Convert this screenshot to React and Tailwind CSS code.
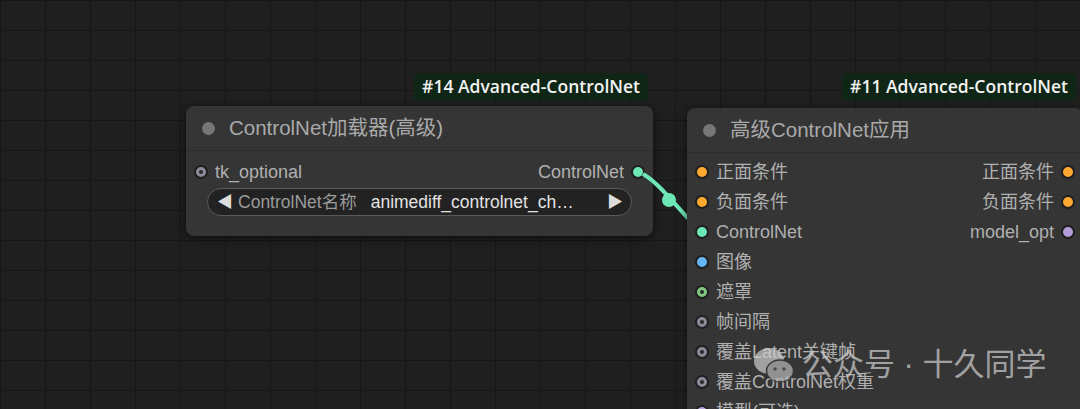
const FONT = { fontFamily: '"Liberation Sans", "Noto Sans CJK SC", sans-serif' };

const COLORS = {
  cond: '#ffa931',
  cnet: '#6ee7b7',
  image: '#64b5f6',
  mask: '#81c784',
  gray: '#8c8a99',
  model: '#b39ddb',
};

function Dot({ color, hollow }) {
  return (
    <span
      className="inline-flex h-[14px] w-[14px] shrink-0 items-center justify-center rounded-full border-2 border-[#1f1f1f]"
      style={{ backgroundColor: color }}
    >
      {hollow && <span className="h-[4px] w-[4px] rounded-full bg-[#2a2a2a]" />}
    </span>
  );
}

function Badge({ children }) {
  return (
    <div className="h-[27px] rounded-t-md bg-[#0f2616] px-2 pt-[3px] text-[17.5px] font-semibold leading-[21px] text-[#f2f2f2]" style={{ fontFamily: '"Open Sans", "Liberation Sans", sans-serif' }}>
      {children}
    </div>
  );
}

function Title({ children }) {
  return (
    <div className="flex h-[45px] items-center gap-[14px] border-b border-[#2d2d2d] pl-[16px]">
      <span className="h-[13px] w-[13px] rounded-full bg-[#777]" />
      <span className="text-[20.5px] text-[#a9a9a9]">{children}</span>
    </div>
  );
}

function SlotRow({ left, right }) {
  return (
    <div className="flex h-[30px] items-center justify-between px-[8px] text-[18px] text-[#b0b0b0]">
      <div className="flex items-center gap-[7px]">
        {left && (
          <>
            <Dot color={left.color} hollow={left.hollow} />
            <span>{left.label}</span>
          </>
        )}
      </div>
      <div className="flex items-center gap-[7px]">
        {right && (
          <>
            <span>{right.label}</span>
            <Dot color={right.color} hollow={right.hollow} />
          </>
        )}
      </div>
    </div>
  );
}

const APPLY_INPUTS = [
  { label: '正面条件', color: COLORS.cond },
  { label: '负面条件', color: COLORS.cond },
  { label: 'ControlNet', color: COLORS.cnet },
  { label: '图像', color: COLORS.image },
  { label: '遮罩', color: COLORS.mask, hollow: true },
  { label: '帧间隔', color: COLORS.gray, hollow: true },
  { label: '覆盖Latent关键帧', color: COLORS.gray, hollow: true },
  { label: '覆盖ControlNet权重', color: COLORS.gray, hollow: true },
  { label: '模型(可选)', color: COLORS.model, hollow: true },
];

const APPLY_OUTPUTS = [
  { label: '正面条件', color: COLORS.cond },
  { label: '负面条件', color: COLORS.cond },
  { label: 'model_opt', color: COLORS.model },
];

export default function App() {
  return (
    <div
      className="relative h-[409px] w-[1080px] overflow-hidden bg-[#1f1f1f] bg-[linear-gradient(to_right,#161616_1px,transparent_1px),linear-gradient(to_bottom,#161616_1px,transparent_1px)] bg-[size:45px_30px]"
      style={FONT}
    >
      {/* loader node */}
      <div className="absolute left-[186px] top-[73px] w-[467px]">
        <div className="flex justify-end pr-[5px]">
          <Badge>#14 Advanced-ControlNet</Badge>
        </div>
        <div className="mt-[6px] h-[130px] rounded-lg bg-[#353535] shadow-[0_2px_8px_rgba(0,0,0,0.6)]">
          <Title>ControlNet加载器(高级)</Title>
          <div className="pt-[6px]">
            <SlotRow
              left={{ label: 'tk_optional', color: COLORS.gray, hollow: true }}
              right={{ label: 'ControlNet', color: COLORS.cnet }}
            />
            <div className="px-[21px] pt-[1px]">
              <div className="flex h-[28px] items-center rounded-full border border-[#5a5a5a] bg-[#222] pl-[9px] pr-[8px] text-[17.5px]">
                <span className="text-[16px] text-[#ddd]">◀</span>
                <span className="ml-[5px] text-[#9a9a9a]">ControlNet名称</span>
                <span className="ml-[14px] flex-1 truncate text-[#e2e2e2]">animediff_controlnet_ch…</span>
                <span className="text-[16px] text-[#ddd]">▶</span>
              </div>
            </div>
          </div>
        </div>
      </div>

      {/* link */}
      <svg className="absolute left-0 top-0" width="1080" height="409">
        <path d="M643 174 C 660 184, 672 202, 700 231" stroke="#6ee7b7" strokeWidth="4" fill="none" />
        <circle cx="669" cy="200" r="7" fill="#6ee7b7" />
      </svg>

      {/* apply node */}
      <div className="absolute left-[687px] top-[73px] w-[396px]">
        <div className="flex justify-end pr-[7px]">
          <Badge>#11 Advanced-ControlNet</Badge>
        </div>
        <div className="mt-[8px] h-[340px] rounded-lg bg-[#353535] shadow-[0_2px_8px_rgba(0,0,0,0.6)]">
          <Title>高级ControlNet应用</Title>
          <div className="flex pt-[4px]">
            <div className="flex-1">
              {APPLY_INPUTS.map((s) => (
                <SlotRow key={s.label} left={s} />
              ))}
            </div>
            <div>
              {APPLY_OUTPUTS.map((s) => (
                <SlotRow key={s.label} right={s} />
              ))}
            </div>
          </div>
        </div>
      </div>

      {/* watermark */}
      <div className="absolute left-[752px] top-[342px] flex items-center gap-[6px] opacity-70">
        <svg width="44" height="40" viewBox="0 0 44 40">
          <ellipse cx="17" cy="16" rx="15" ry="13" fill="#cfcfcf" />
          <ellipse cx="28" cy="26" rx="13.5" ry="11" fill="#bababa" stroke="#3a3a3a" strokeWidth="1.5" />
          <circle cx="23" cy="24" r="1.8" fill="#555" />
          <circle cx="32" cy="24" r="1.8" fill="#555" />
        </svg>
        <span className="text-[31px] text-[#d0d0d0]">公众号 · 十久同学</span>
      </div>
    </div>
  );
}
